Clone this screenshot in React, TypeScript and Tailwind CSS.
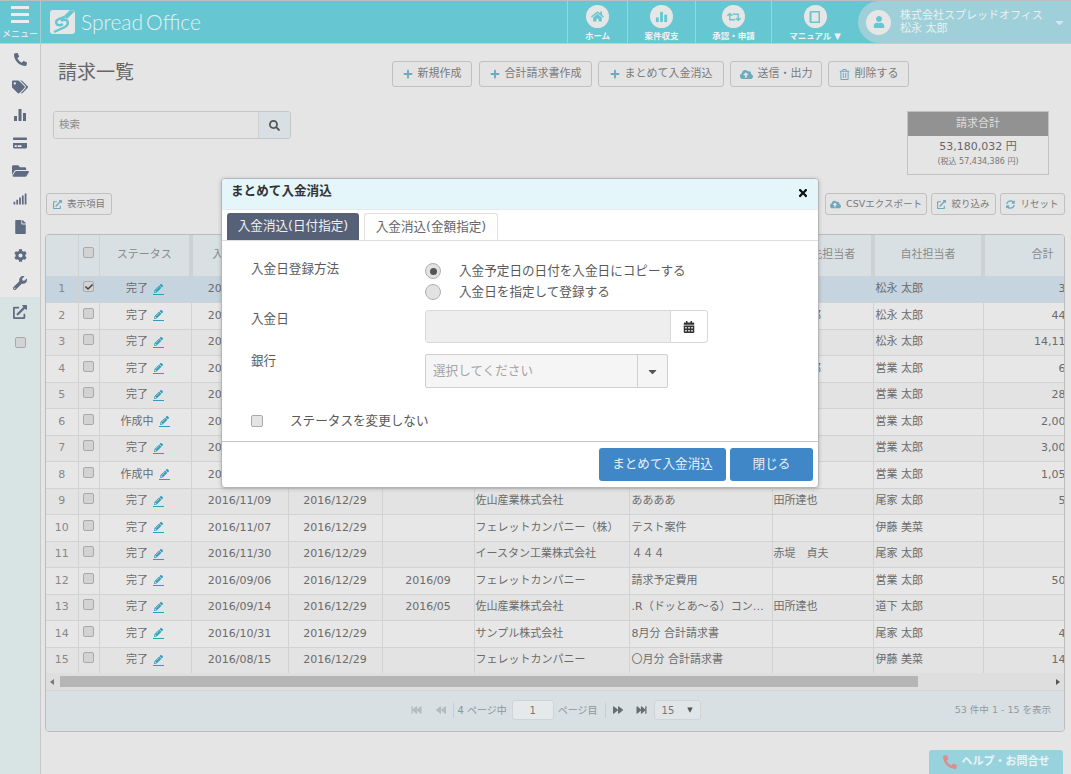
import type { ReactNode } from 'react';
import {
  FaBackward, FaCalendarAlt, FaCaretDown, FaCheck, FaCloudUploadAlt, FaCog, FaCreditCard, FaExternalLinkAlt,
  FaFastBackward, FaFastForward, FaFile, FaFolderOpen, FaForward, FaHome, FaPencilAlt, FaPhoneAlt, FaPlus,
  FaRegTrashAlt, FaRetweet, FaSearch, FaSignal, FaSyncAlt, FaTags, FaTimes, FaUser, FaWrench,
} from 'react-icons/fa';

const rows = [
  ['1', '完了', '2016/11/30', '2016/12/29', '', 'サンプル株式会社', '11月分 請求書', '', '松永 太郎', '32,400'],
  ['2', '完了', '2016/11/30', '2016/12/29', '', 'フェレットカンパニー', '保守費用', '田所 達郎', '松永 太郎', '444,000'],
  ['3', '完了', '2016/11/30', '2016/12/29', '', '佐山産業株式会社', 'システム開発', '', '松永 太郎', '14,112,000'],
  ['4', '完了', '2016/11/30', '2016/12/29', '', 'イースタン工業株式会社', '請求予定費用', '赤堤 貞郎', '営業 太郎', '64,800'],
  ['5', '完了', '2016/11/30', '2016/12/29', '', 'サンプル株式会社', 'テスト案件', '', '営業 太郎', '280,000'],
  ['6', '作成中', '2016/11/30', '2016/12/29', '', 'フェレットカンパニー', '導入費用', '', '営業 太郎', '2,000,000'],
  ['7', '完了', '2016/11/30', '2016/12/29', '', '佐山産業株式会社', '導入費用', '', '営業 太郎', '3,000,000'],
  ['8', '作成中', '2016/11/30', '2016/12/29', '', 'サンプル株式会社', '導入費用', '', '営業 太郎', '1,050,000'],
  ['9', '完了', '2016/11/09', '2016/12/29', '', '佐山産業株式会社', 'ああああ', '田所達也', '尾家 太郎', '54,000'],
  ['10', '完了', '2016/11/07', '2016/12/29', '', 'フェレットカンパニー（株）', 'テスト案件', '', '伊藤 美菜', '8,000'],
  ['11', '完了', '2016/11/30', '2016/12/29', '', 'イースタン工業株式会社', '４４４', '赤堤　貞夫', '尾家 太郎', '9,000'],
  ['12', '完了', '2016/09/06', '2016/12/29', '2016/09', 'フェレットカンパニー', '請求予定費用', '', '営業 太郎', '500,000'],
  ['13', '完了', '2016/09/14', '2016/12/29', '2016/05', '佐山産業株式会社', '.R（ドッとあ～る）コンサルティング', '田所達也', '道下 太郎', '7,000'],
  ['14', '完了', '2016/10/31', '2016/12/29', '', 'サンプル株式会社', '8月分 合計請求書', '', '尾家 太郎', '43,200'],
  ['15', '完了', '2016/08/15', '2016/12/29', '', 'フェレットカンパニー', '〇月分 合計請求書', '', '伊藤 美菜', '140,000'],
];

const colWidths = ['w-[32px]', 'w-[21px]', 'w-[92px]', 'w-[97px]', 'w-[94px]', 'w-[92px]', 'w-[155px]', 'w-[143px]', 'w-[101px]', 'w-[110px]', 'w-[117px]'];

const Check = ({ checked = false }: { checked?: boolean }) => (
  <span className="inline-flex h-[11px] w-[11px] items-center justify-center rounded-[2px] border border-[#a9a9a9] bg-[#d3d3d3] align-middle">
    {checked && <FaCheck className="h-[8px] w-[8px] text-[#444]" />}
  </span>
);

const ToolButton = ({ icon, label, className }: { icon: ReactNode; label: string; className: string }) => (
  <button className={`flex items-center justify-center gap-[5px] rounded-[3px] border border-[#c0c0c0] bg-[#e4e4e4] text-[#7a7a7a] ${className}`}>
    <span className="text-[#6fa9bd]">{icon}</span>
    {label}
  </button>
);

const NavItem = ({ icon, label, width, divider = true }: { icon: ReactNode; label: string; width: string; divider?: boolean }) => (
  <div className={`flex h-full flex-col items-center pt-[4px] ${width} ${divider ? 'border-r border-[#9fd3da]' : ''}`}>
    <span className="flex h-[23px] w-[23px] items-center justify-center rounded-full bg-[#e6e6e6] text-[#66c6d2]">{icon}</span>
    <span className="mt-[2px] whitespace-nowrap text-[8.5px] font-bold leading-[12px] text-[#f2f2f2]">{label}</span>
  </div>
);

const SideIcon = ({ children }: { children: ReactNode }) => (
  <div className="flex h-[28px] items-center justify-center text-[#5f6b80]">{children}</div>
);

export default function App() {
  return (
    <div className="relative flex h-[774px] w-[1071px] flex-col overflow-hidden bg-[#e5e5e5] font-['DejaVu_Sans','Noto_Sans_CJK_JP',sans-serif] text-[11px] text-[#6b6b6b]">
      {/* Header */}
      <header className="flex h-[44px] shrink-0 border-y border-y-[#c9c9c9] border-t-[#bdbdbd] bg-[#66c6d2]">
        <div className="flex w-[41px] flex-col items-center border-r border-[#a6ccd2] pt-[5px]">
          <span className="h-[3px] w-[18px] bg-[#ececec]" />
          <span className="mt-[4px] h-[3px] w-[18px] bg-[#ececec]" />
          <span className="mt-[4px] h-[3px] w-[18px] bg-[#ececec]" />
          <span className="mt-[4px] whitespace-nowrap text-[9px] leading-[14px] text-[#eef5f6]">メニュー</span>
        </div>
        <div className="flex w-[526px] items-center pl-[9px]">
          <svg viewBox="0 0 25 24" className="h-[24px] w-[25px]">
            <rect width="25" height="24" rx="3" fill="#e6e6e6" />
            <path d="M25 1 L17 9 L14 6 L20 0z" fill="#66c6d2" />
            <path d="M15 7 L9 9 C4 11 6 16 11 15 L13 14" fill="none" stroke="#66c6d2" strokeWidth="2.4" />
            <path d="M4 22 L15 17 C20 14 18 9 13 10 L11 11" fill="none" stroke="#66c6d2" strokeWidth="2.4" />
          </svg>
          <span className="ml-[6px] whitespace-nowrap font-['Lato',sans-serif] text-[21px] font-light text-[#e2f1f3]">
            Spread<span className="ml-[3px]">Office</span>
          </span>
        </div>
        <div className="flex h-full border-l border-[#9fd3da]">
          <NavItem width="w-[60px]" label="ホーム" icon={<FaHome className="h-[13px] w-[13px]" />} />
          <NavItem
            width="w-[68px]"
            label="案件収支"
            icon={
              <svg viewBox="0 0 14 14" className="h-[13px] w-[13px]" fill="currentColor">
                <rect x="1" y="8" width="3" height="5" />
                <rect x="5.5" y="2" width="3" height="11" />
                <rect x="10" y="5" width="3" height="8" />
              </svg>
            }
          />
          <NavItem width="w-[76px]" label="承認・申請" icon={<FaRetweet className="h-[14px] w-[14px]" />} />
          <NavItem
            width="w-[86px]"
            divider={false}
            label="マニュアル ▼"
            icon={
              <svg viewBox="0 0 14 14" className="h-[14px] w-[14px]" fill="currentColor">
                <path d="M3 1h9v12H3a1.5 1.5 0 0 1-1.500-1.500v-9A1.500 1.500 0 0 1 3 1zm.5 1.500v9h7v-9z" />
              </svg>
            }
          />
        </div>
        <div className="flex h-full flex-1 items-center rounded-l-[22px] bg-[#9fd0d9] pl-[8px]">
          <span className="flex h-[25px] w-[25px] shrink-0 items-center justify-center rounded-full bg-[#e6e6e6] text-[#66c6d2]">
            <FaUser className="h-[12px] w-[12px]" />
          </span>
          <div className="ml-[9px] whitespace-nowrap text-[11px] leading-[13px] text-[#e8f0f1]">
            <div>株式会社スプレッドオフィス</div>
            <div>松永 太郎</div>
          </div>
          <FaCaretDown className="ml-[10px] h-[13px] w-[13px] text-[#d3e8eb]" />
        </div>
      </header>

      <div className="flex min-h-0 flex-1">
        {/* Sidebar */}
        <aside className="flex w-[41px] shrink-0 flex-col border-r border-[#c8c8c8] bg-[#e8e8e8]">
          <div className="pt-[1px]">
            <SideIcon><FaPhoneAlt className="h-[13px] w-[13px]" /></SideIcon>
            <SideIcon><FaTags className="h-[16px] w-[16px]" /></SideIcon>
            <SideIcon>
              <svg viewBox="0 0 14 14" className="h-[14px] w-[14px]" fill="currentColor">
                <rect x="1" y="8" width="3" height="5" />
                <rect x="5.500" y="1" width="3" height="12" />
                <rect x="10" y="5" width="3" height="8" />
              </svg>
            </SideIcon>
            <SideIcon><FaCreditCard className="h-[14px] w-[14px]" /></SideIcon>
            <SideIcon><FaFolderOpen className="h-[16px] w-[17px]" /></SideIcon>
            <SideIcon><FaSignal className="h-[14px] w-[14px]" /></SideIcon>
            <SideIcon><FaFile className="h-[14px] w-[11px]" /></SideIcon>
            <SideIcon><FaCog className="h-[13px] w-[13px]" /></SideIcon>
            <SideIcon><FaWrench className="h-[14px] w-[14px]" /></SideIcon>
          </div>
          <div className="flex-1 bg-[#d8e3e3] pt-[1px]">
            <SideIcon><FaExternalLinkAlt className="h-[14px] w-[14px]" /></SideIcon>
            <div className="mt-[11px] flex justify-center"><Check /></div>
          </div>
        </aside>

        {/* Main */}
        <main className="flex min-w-0 flex-1 flex-col">
          <div className="flex h-[43px] items-start pt-[17px]">
            <h1 className="ml-[17px] w-[77px] -translate-y-[1px] whitespace-nowrap text-[19px] font-normal leading-[24px] text-[#666]">請求一覧</h1>
            <div className="ml-[257px] flex gap-[6px]">
              <ToolButton className="mr-[1px] h-[26px] w-[80px]" icon={<FaPlus className="h-[10px] w-[10px]" />} label="新規作成" />
              <ToolButton className="h-[26px] w-[113px]" icon={<FaPlus className="h-[10px] w-[10px]" />} label="合計請求書作成" />
              <ToolButton className="h-[26px] w-[126px]" icon={<FaPlus className="h-[10px] w-[10px]" />} label="まとめて入金消込" />
              <ToolButton className="h-[26px] w-[92px]" icon={<FaCloudUploadAlt className="h-[13px] w-[13px]" />} label="送信・出力" />
              <ToolButton className="h-[26px] w-[81px]" icon={<FaRegTrashAlt className="h-[11px] w-[11px]" />} label="削除する" />
            </div>
          </div>

          <div className="mt-[24px] flex items-start">
            <div className="ml-[12px] flex h-[28px] w-[238px] overflow-hidden rounded-[3px] border border-[#c6c6c6] text-[10.5px]">
              <div className="flex flex-1 items-center bg-[#e4e4e4] pl-[5px] text-[#8a8a8a]">検索</div>
              <div className="flex w-[32px] items-center justify-center border-l border-[#d0d0d0] bg-[#d8e0e3] text-[#555]">
                <FaSearch className="h-[11px] w-[11px]" />
              </div>
            </div>
            <div className="ml-auto mr-[22px] w-[142px] border border-[#c2c2c2] text-center">
              <div className="flex h-[24px] items-center justify-center bg-[#929292] text-[#dfdfdf]">請求合計</div>
              <div className="h-[38px] border-t border-[#e5e5e5] pt-[2px]">
                <div className="leading-[15px] text-[#666]">53,180,032 円</div>
                <div className="mt-[2px] text-[8px] leading-[11px] text-[#777]">(税込 57,434,386 円)</div>
              </div>
            </div>
          </div>

          <div className="mt-[18px] flex h-[22px] text-[9.5px]">
            <ToolButton className="ml-[5px] w-[66px]" icon={<FaExternalLinkAlt className="h-[9px] w-[9px]" />} label="表示項目" />
            <div className="ml-auto mr-[6px] flex gap-[4px]">
              <ToolButton className="w-[102px]" icon={<FaCloudUploadAlt className="h-[11px] w-[11px]" />} label="CSVエクスポート" />
              <ToolButton className="w-[65px]" icon={<FaExternalLinkAlt className="h-[9px] w-[9px]" />} label="絞り込み" />
              <ToolButton className="w-[65px]" icon={<FaSyncAlt className="h-[9px] w-[9px]" />} label="リセット" />
            </div>
          </div>

          {/* Table */}
          <section className="ml-[4px] mr-[6px] mt-[19px] h-[498px] shrink-0 overflow-hidden rounded-[4px] border border-[#bcbcbc]">
            <div className="h-[438px] overflow-hidden">
              <table className="w-[1054px] table-fixed border-collapse">
                <colgroup>
                  {colWidths.map((w, i) => (
                    <col key={i} className={w} />
                  ))}
                </colgroup>
                <thead>
                  <tr className="h-[41px] bg-[#d8e0e3] font-normal text-[#8a8a8a]">
                    <th className="border-r border-[#cdd2d4] font-normal" />
                    <th className="border-r border-[#cdd2d4] pb-[5px] font-normal"><Check /></th>
                    <th className="border-r-[4px] border-[#ccd1d3] font-normal">ステータス</th>
                    <th className="border-r-[3px] border-[#ccd1d3] font-normal">入金予定日</th>
                    <th className="border-r-[3px] border-[#ccd1d3] font-normal">請求日</th>
                    <th className="border-r-[3px] border-[#ccd1d3] font-normal">対象月</th>
                    <th className="border-r-[3px] border-[#ccd1d3] font-normal">取引先</th>
                    <th className="border-r-[3px] border-[#ccd1d3] font-normal">案件名</th>
                    <th className="border-r-[4px] border-[#ccd1d3] font-normal">取引先担当者</th>
                    <th className="border-r-[4px] border-[#ccd1d3] font-normal">自社担当者</th>
                    <th className="font-normal">合計</th>
                  </tr>
                </thead>
                <tbody>
                  {rows.map((r, i) => (
                    <tr
                      key={r[0]}
                      className={`h-[26.5px] ${i === 0 ? 'bg-[#c6d4df]' : i % 2 ? 'bg-[#e7e7e7]' : 'bg-[#e3e3e3]'}`}
                    >
                      <td className="border border-l-0 border-[#d2d2d2] text-center text-[#888]">{r[0]}</td>
                      <td className="border border-[#d2d2d2] pb-[5px] text-center"><Check checked={i === 0} /></td>
                      <td className="border border-[#d2d2d2] text-center">
                        <span className="inline-flex items-center gap-[5px]">
                          {r[1]}
                          <span className="inline-flex flex-col items-center border-b border-[#2f9dbd] text-[#2f9dbd]">
                            <FaPencilAlt className="mb-[1px] h-[9px] w-[11px]" />
                          </span>
                        </span>
                      </td>
                      <td className="border border-[#d2d2d2] text-center">{r[2]}</td>
                      <td className="border border-[#d2d2d2] text-center">{r[3]}</td>
                      <td className="border border-[#d2d2d2] text-center">{r[4]}</td>
                      <td className="truncate border border-[#d2d2d2] px-[1px]">{r[5]}</td>
                      <td className="truncate border border-[#d2d2d2] px-[2px]">{r[6]}</td>
                      <td className="truncate border border-[#d2d2d2] px-[1px]">{r[7]}</td>
                      <td className="truncate border border-[#d2d2d2] px-[2px]">{r[8]}</td>
                      <td className="border border-r-0 border-[#d2d2d2] pr-[3px] text-right">{r[9]}</td>
                    </tr>
                  ))}
                </tbody>
              </table>
            </div>
            {/* Scrollbar */}
            <div className="flex h-[17px] items-center bg-[#dedede] px-[4px]">
              <span className="h-0 w-0 border-y-[3px] border-r-[4px] border-y-transparent border-r-[#777]" />
              <span className="ml-[6px] h-[11px] w-[858px] bg-[#b5b5b5]" />
              <span className="ml-auto h-0 w-0 border-y-[3px] border-l-[4px] border-y-transparent border-l-[#555]" />
            </div>
            {/* Pager */}
            <div className="grid h-[41px] grid-cols-[1fr_auto_1fr] items-center border-t border-[#d0d6d8] bg-[#d8e0e3] pb-[2px] text-[10px] text-[#8f9699]">
              <span />
              <div className="flex translate-x-[1px] items-center">
                <FaFastBackward className="h-[10px] w-[11px] text-[#b4bcc0]" />
                <FaBackward className="ml-[14px] h-[10px] w-[10px] text-[#b4bcc0]" />
                <span className="ml-[7px] h-[15px] border-l border-[#c8ced0]" />
                <span className="ml-[3px]">4 ページ中</span>
                <span className="ml-[5px] flex h-[20px] w-[42px] items-center justify-center rounded-[3px] border border-[#cfd4d6] bg-[#e6e9ea] text-[#777]">1</span>
                <span className="ml-[4px]">ページ目</span>
                <span className="ml-[7px] h-[15px] border-l border-[#c8ced0]" />
                <FaForward className="ml-[7px] h-[10px] w-[10px] text-[#666e72]" />
                <FaFastForward className="ml-[13px] h-[10px] w-[11px] text-[#666e72]" />
                <span className="ml-[7px] flex h-[20px] w-[47px] items-center justify-between rounded-[3px] border border-[#cfd4d6] bg-[#e0e5e7] px-[7px] text-[#777]">
                  15
                  <span className="text-[7px] text-[#555]">▼</span>
                </span>
              </div>
              <span className="pr-[13px] text-right text-[9.5px] text-[#92999c]">53 件中 1 - 15 を表示</span>
            </div>
          </section>

          <button className="ml-auto mr-[8px] mt-[18px] flex h-[24px] w-[134px] shrink-0 items-center justify-center gap-[5px] rounded-t-[3px] bg-[#98d3dd] text-[11px] font-bold text-[#e9f4f6]">
            <FaPhoneAlt className="h-[14px] w-[14px] text-[#dc8f8c]" />
            ヘルプ・お問合せ
          </button>
        </main>
      </div>

      {/* Modal */}
      <div className="absolute left-[221px] top-[178px] flex h-[310px] w-[598px] flex-col overflow-hidden rounded-[4px] border border-[#b5b5b5] bg-white text-[12.6px] text-[#5a5a5a] shadow-[0_1px_4px_rgba(0,0,0,0.2)]">
        <div className="flex h-[31px] shrink-0 items-center justify-between border-b border-[#eaeaea] bg-[#e4f6fa] pl-[9px] pr-[9px] font-bold text-[#333]">
          <span className="mb-[5px]">まとめて入金消込</span>
          <FaTimes className="mb-[2px] h-[12px] w-[12px] text-[#111]" />
        </div>
        <div className="mt-[3px] flex h-[28px] shrink-0 gap-[5px] border-b border-[#e0e0e0] pl-[5px]">
          <div className="flex w-[132px] items-center justify-center rounded-t-[3px] bg-[#566178] text-[#f0f0f0]">入金消込(日付指定)</div>
          <div className="flex w-[134px] items-center justify-center rounded-t-[3px] border border-b-0 border-[#dedede] text-[#666]">入金消込(金額指定)</div>
        </div>
        <div className="flex-1 pl-[29px]">
          <div className="mt-[19px] flex h-[42px]">
            <div className="w-[174px] leading-[18px]">入金日登録方法</div>
            <div className="flex flex-col gap-[5px] pt-[3px] leading-[16px]">
              <label className="flex items-center">
                <span className="flex h-[16px] w-[16px] items-center justify-center rounded-full border border-[#b0b0b0] bg-[#e2e2e2]">
                  <span className="h-[7px] w-[7px] rounded-full bg-[#555]" />
                </span>
                <span className="ml-[18px]">入金予定日の日付を入金日にコピーする</span>
              </label>
              <label className="flex items-center">
                <span className="h-[16px] w-[16px] rounded-full border border-[#b0b0b0] bg-[#e2e2e2]" />
                <span className="ml-[18px]">入金日を指定して登録する</span>
              </label>
            </div>
          </div>
          <div className="mt-[8px] flex">
            <div className="w-[174px] leading-[18px]">入金日</div>
            <div className="flex h-[33px] w-[283px] overflow-hidden rounded-[3px] border border-[#d8d8d8]">
              <div className="flex-1 bg-[#eeeeee]" />
              <div className="flex w-[37px] items-center justify-center border-l border-[#d8d8d8] text-[#333]">
                <FaCalendarAlt className="h-[12px] w-[12px]" />
              </div>
            </div>
          </div>
          <div className="mt-[11px] flex">
            <div className="-mt-[2px] w-[174px] leading-[18px]">銀行</div>
            <div className="flex h-[34px] w-[243px] overflow-hidden rounded-[2px] border border-[#cfcfcf] bg-[#f5f5f5] text-[#a5a5a5]">
              <div className="flex flex-1 items-center pl-[7px] pt-[1px]">選択してください</div>
              <div className="flex w-[30px] items-center justify-center border-l border-[#cfcfcf] text-[#555]">
                <FaCaretDown className="h-[13px] w-[13px]" />
              </div>
            </div>
          </div>
          <div className="mt-[24px] flex items-center">
            <span className="h-[12px] w-[12px] rounded-[2px] border border-[#a9a9a9] bg-[#e4e4e4]" />
            <span className="ml-[27px]">ステータスを変更しない</span>
          </div>
        </div>
        <div className="flex h-[46px] shrink-0 items-start justify-end gap-[4px] border-t border-[#c4c4c4] pr-[5px] pt-[6px] text-[#e8f0f7]">
          <button className="h-[33px] w-[127px] rounded-[3px] bg-[#3f87c6]">まとめて入金消込</button>
          <button className="h-[33px] w-[83px] rounded-[3px] bg-[#3f87c6]">閉じる</button>
        </div>
      </div>
    </div>
  );
}
